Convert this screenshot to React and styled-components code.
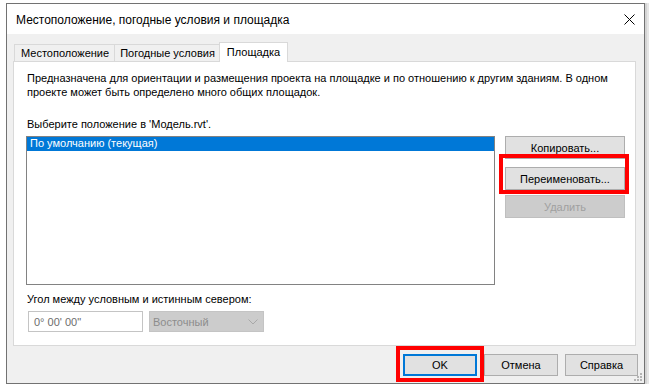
import React from "react";
import styled, { createGlobalStyle, css } from "styled-components";

const Global = createGlobalStyle`
  html, body { margin: 0; padding: 0; background: #ffffff; }
  body { font-family: "Liberation Sans", Arial, sans-serif; font-size: 11px; color: #000; }
  * { box-sizing: border-box; }
`;

const Page = styled.div`
  width: 649px;
  height: 387px;
  padding: 3px 0 0 6px;
  overflow: hidden;
  position: relative;
`;

const Window = styled.div`
  width: 639px;
  height: 381px;
  border: 1px solid #727272;
  display: flex;
  flex-direction: column;
  background: #f0f0f0;
  box-shadow: 2px 0 0 #d4d4d4, 4px 0 0 #e6e6e6;
`;

const TitleBar = styled.div`
  height: 30px;
  flex: none;
  background: #ffffff;
  display: flex;
  align-items: center;
  justify-content: space-between;
  padding: 1px 9px 0 9px;
`;

const Title = styled.div`
  font-size: 12px;
  color: #000;
`;

const CloseGlyph = styled.svg`
  width: 11px;
  height: 11px;
`;

const Body = styled.div`
  flex: 1;
  display: flex;
  flex-direction: column;
  padding: 8px 8px 0 6px;
  position: relative;
`;

const TabStrip = styled.div`
  display: flex;
  align-items: flex-end;
  height: 20px;
  padding-left: 1px;
  position: relative;
  z-index: 1;
  margin-bottom: -1px;
`;

const Tab = styled.div`
  height: ${(p) => (p.$active ? "20px" : "18px")};
  padding: 0 ${(p) => p.$padR}px 0 ${(p) => p.$padL}px;
  border: 1px solid #d9d9d9;
  border-bottom: ${(p) => (p.$active ? "none" : "1px solid #d9d9d9")};
  background: ${(p) => (p.$active ? "#ffffff" : "#f0f0f0")};
  margin-right: -1px;
  display: flex;
  align-items: center;
  line-height: 14px;
  white-space: nowrap;
  ${(p) => p.$active && css`padding-bottom: 2px;`}
`;

const Panel = styled.div`
  height: 285px;
  background: #ffffff;
  border: 1px solid #d9d9d9;
  padding: 9px 10px 0 12px;
  display: flex;
  flex-direction: column;
`;

const Description = styled.div`
  line-height: 14px;
  padding-left: 1px;
  white-space: nowrap;
`;

const Label = styled.div`
  line-height: 14px;
  padding-left: 1px;
  margin-top: ${(p) => p.$top}px;
`;

const ListRow = styled.div`
  display: flex;
  gap: 10px;
  margin-top: 5px;
`;

const ListBox = styled.div`
  width: 469px;
  height: 149px;
  border: 1px solid #828282;
  background: #ffffff;
`;

const ListItem = styled.div`
  height: 14px;
  line-height: 13px;
  padding-left: 3px;
  color: ${(p) => (p.$selected ? "#ffffff" : "#000")};
  background: ${(p) => (p.$selected ? "#0078d7" : "transparent")};
`;

const ButtonColumn = styled.div`
  display: flex;
  flex-direction: column;
  width: 120px;
`;

const Button = styled.button`
  font-family: inherit;
  font-size: 11px;
  width: ${(p) => p.$w || 120}px;
  height: ${(p) => p.$h || 23}px;
  margin-top: ${(p) => p.$top || 0}px;
  background: ${(p) => (p.disabled ? "#cccccc" : "#e1e1e1")};
  color: ${(p) => (p.disabled ? "#a0a0a0" : "#000")};
  border: 1px solid ${(p) => (p.disabled ? "#bfbfbf" : p.$default ? "#0078d7" : "#adadad")};
  box-shadow: ${(p) => (p.$default ? "inset 0 0 0 1px #0078d7" : "none")};
  padding: 0;
  display: flex;
  align-items: center;
  justify-content: center;
  line-height: 14px;
  flex: none;
`;

const Highlight = styled.div`
  position: relative;
  flex: none;
  &::after {
    content: "";
    position: absolute;
    top: -${(p) => p.$t}px;
    right: -${(p) => p.$r}px;
    bottom: -${(p) => p.$b}px;
    left: -${(p) => p.$l}px;
    border: 4px solid #ff0000;
    pointer-events: none;
  }
`;

const FieldRow = styled.div`
  display: flex;
  gap: 6px;
  margin-top: 5px;
  padding-left: 2px;
`;

const TextField = styled.div`
  width: 115px;
  height: 21px;
  border: 1px solid #c4c4c4;
  background: #ffffff;
  color: #6d6d6d;
  padding-left: 5px;
  display: flex;
  align-items: center;
`;

const SelectBox = styled.div`
  width: 115px;
  height: 21px;
  border: 1px solid #c4c4c4;
  background: #cccccc;
  color: #8c8c8c;
  padding: 0 5px 0 3px;
  display: flex;
  align-items: center;
  justify-content: space-between;
`;

const Footer = styled.div`
  display: flex;
  justify-content: flex-end;
  gap: 7px;
  padding: 8px 0 0 0;
  margin-right: -2px;
`;

const Grip = styled.svg`
  position: absolute;
  right: 1px;
  bottom: 1px;
  width: 10px;
  height: 10px;
`;

export default function App() {
  return (
    <>
      <Global />
      <Page>
        <Window>
          <TitleBar>
            <Title>Местоположение, погодные условия и площадка</Title>
            <CloseGlyph viewBox="0 0 11 11">
              <path d="M0.5 0.5 L10.5 10.5 M10.5 0.5 L0.5 10.5" stroke="#000" strokeWidth="1" fill="none" />
            </CloseGlyph>
          </TitleBar>
          <Body>
            <TabStrip>
              <Tab $padL={6} $padR={5}>Местоположение</Tab>
              <Tab $padL={5} $padR={4}>Погодные условия</Tab>
              <Tab $padL={7} $padR={7} $active>Площадка</Tab>
            </TabStrip>
            <Panel>
              <Description>
                Предназначена для ориентации и размещения проекта на площадке и по отношению к другим зданиям. В одном
                <br />
                проекте может быть определено много общих площадок.
              </Description>
              <Label $top={18}>Выберите положение в 'Модель.rvt'.</Label>
              <ListRow>
                <ListBox>
                  <ListItem $selected>По умолчанию (текущая)</ListItem>
                </ListBox>
                <ButtonColumn>
                  <Button>Копировать...</Button>
                  <Highlight $t={5} $r={4} $b={4} $l={6}>
                    <Button $top={8}>Переименовать...</Button>
                  </Highlight>
                  <Button $top={5} disabled>Удалить</Button>
                </ButtonColumn>
              </ListRow>
              <Label $top={7}>Угол между условным и истинным севером:</Label>
              <FieldRow>
                <TextField>0° 00' 00"</TextField>
                <SelectBox>
                  Восточный
                  <svg width="10" height="6" viewBox="0 0 10 6">
                    <path d="M0.5 0.5 L5 5 L9.5 0.5" stroke="#a8a8a8" strokeWidth="1" fill="none" />
                  </svg>
                </SelectBox>
              </FieldRow>
            </Panel>
            <Footer>
              <Highlight $t={8} $r={7} $b={6} $l={7}>
                <Button $w={74} $h={22} $default>OK</Button>
              </Highlight>
              <Button $w={74} $h={22}>Отмена</Button>
              <Button $w={73} $h={22}>Справка</Button>
            </Footer>
            <Grip viewBox="0 0 10 10">
              <g fill="#b4b4b4">
                <rect x="7" y="1" width="2" height="2" />
                <rect x="4" y="4" width="2" height="2" />
                <rect x="7" y="4" width="2" height="2" />
                <rect x="1" y="7" width="2" height="2" />
                <rect x="4" y="7" width="2" height="2" />
                <rect x="7" y="7" width="2" height="2" />
              </g>
            </Grip>
          </Body>
        </Window>
      </Page>
    </>
  );
}
